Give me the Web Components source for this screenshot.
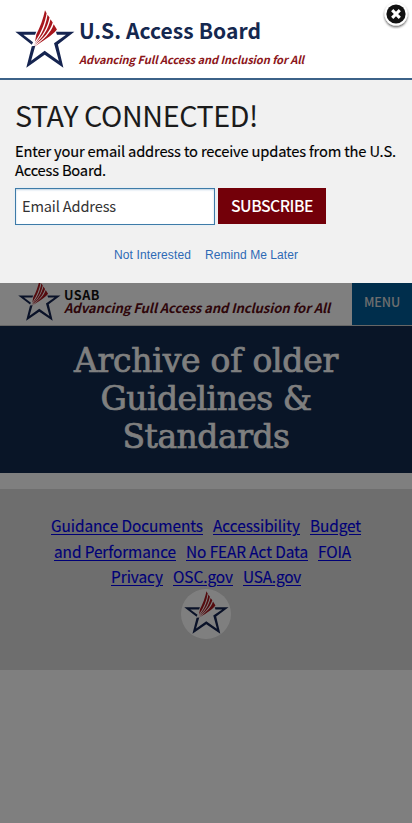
<!DOCTYPE html>
<html lang="en"><head><meta charset="utf-8"><title>U.S. Access Board</title>
<style>
html,body{margin:0;height:100%;overflow:hidden;background:#fff}
body{font-family:"Noto Sans CJK SC","Noto Sans",sans-serif}
</style></head><body>
<access-app></access-app>
<script>
const define=(name,html,extra)=>customElements.define(name,class extends HTMLElement{
  constructor(){super();this.attachShadow({mode:'open'}).innerHTML=html;}
  connectedCallback(){if(extra)extra(this);}
});
// One line of text whose tracking is adjusted to fill the width in the w attribute.
define('fit-text','<style>:host{display:inline-block;white-space:nowrap;text-align:left}span{display:inline-block;text-decoration:inherit}</style><span><slot></slot></span>',el=>{
  const s=el.shadowRoot.querySelector('span'),n=el.textContent.length,w=+el.getAttribute('w');
  s.style.letterSpacing=((w-s.getBoundingClientRect().width)/n)+'px';
  el.style.width=w+'px';
});
define('board-star',`<style>:host{display:block}svg{display:block;width:100%;height:100%}</style>
<svg viewBox="14 12 186 175" preserveAspectRatio="none">
<g fill="#152450"><path d="M15 78H80L76 87H40L70 109L66 117Z"/><path d="M66 121L77 120L64 165L106 135L150 166L135 112L172 87H144L141 78H198L147 116L164 186L106 147L49 186Z"/></g>
<g fill="#a8161d"><path d="M107 13L112 22C107 50 97 78 76 108L80 86C92 64 101 40 107 13Z"/><path d="M115 26L121 35C114 65 102 90 74 114C97 88 109 60 115 26Z"/><path d="M124 40L131 50C122 76 106 97 72 119C101 96 117 70 124 40Z"/><path d="M134 55L144 71C128 91 102 104 69 126C104 100 125 82 134 55Z"/></g></svg>`);
define('brand-bar',`<style>
:host{display:flex;box-sizing:border-box;height:80px;padding:10px 0 0 15px;background:#fff;border-bottom:2px solid #3c6288}
board-star{width:60px;height:58px}
div{display:flex;flex-direction:column;margin-left:4px}
.a{font:bold 21px/30px "Noto Sans CJK SC",sans-serif;color:#15284f;margin-top:5px}
.b{font:italic bold 11px/16px "Noto Sans CJK SC",sans-serif;color:#8c1519;margin-top:6px}
</style><board-star></board-star><div><fit-text class="a" w="182">U.S. Access Board</fit-text><fit-text class="b" w="225">Advancing Full Access and Inclusion for All</fit-text></div>`);
define('subscribe-form',`<style>
:host{display:flex;gap:3px;height:37px}
.in{box-sizing:border-box;width:200px;height:37px;border:1px solid #3e7ba8;background:#fff;padding-left:6px;font-size:14.6px;line-height:34px;color:#333;box-shadow:inset 0 1px 2px #bfd2e2,0 0 3px #dcecf8}
.bt{width:108px;height:36px;background:#730009;color:#fff;font-size:15.8px;line-height:36px;text-align:center;font-weight:500}
</style><div class="in"><fit-text w="94">Email Address</fit-text></div><div class="bt"><fit-text w="82">SUBSCRIBE</fit-text></div>`);
define('stay-connected',`<style>
:host{display:block;position:absolute;left:0;top:0;width:412px;height:283px;background:#f1f1f1}
.c{padding:0 0 0 15px}
.h{font-size:28.7px;line-height:38px;color:#1b1b1b;margin-top:16px;display:block}
.p{font-size:14.7px;line-height:19px;color:#000;display:block;-webkit-text-stroke:.15px #000}
.p1{margin-top:7px}
subscribe-form{margin-top:9px}
.l{display:flex;gap:14px;margin:23px 0 0 99px;font:12px/14px "Liberation Sans",sans-serif;color:#2d69b5}
.x{position:absolute;right:2px;top:1px;width:28px;height:28px}
</style><brand-bar></brand-bar><div class="c">
<fit-text class="h" w="243">STAY CONNECTED!</fit-text>
<fit-text class="p p1" w="381">Enter your email address to receive updates from the U.S.</fit-text>
<fit-text class="p" w="91">Access Board.</fit-text>
<subscribe-form></subscribe-form>
<div class="l"><fit-text w="77">Not Interested</fit-text><fit-text w="93">Remind Me Later</fit-text></div></div>
<svg class="x" viewBox="0 0 28 28"><defs><filter id="f" x="-30%" y="-30%" width="160%" height="160%"><feDropShadow dx="0" dy="1.5" stdDeviation="1.3" flood-opacity=".65"/></filter></defs><circle cx="14" cy="13" r="11.5" fill="#fff" filter="url(#f)"/><circle cx="14" cy="13" r="9.6" fill="#111"/><path d="M10.2 9.2L17.8 16.8M17.8 9.2L10.2 16.8" stroke="#fff" stroke-width="3.1"/></svg>`);
define('site-header',`<style>
:host{display:flex;height:59px;box-sizing:border-box;border-bottom:1px solid #ccc;background:#fff;padding-left:18px}
board-star{width:43px;height:41px;margin-top:13px}
.t{display:flex;flex-direction:column;margin-left:3px;flex:1}
.a{font-size:12.7px;line-height:13px;font-weight:bold;color:#111;margin-top:21px}
.b{font-size:13.1px;line-height:13px;font-weight:bold;font-style:italic;color:#5c0c14}
.m{width:60px;background:#005c99;color:#ddd;text-align:center;font-size:12.6px;line-height:69px;font-weight:500}
</style><board-star></board-star><div class="t"><fit-text class="a" w="36">USAB</fit-text><fit-text class="b" w="266">Advancing Full Access and Inclusion for All</fit-text></div><div class="m"><fit-text w="36">MENU</fit-text></div>`);
define('page-title',`<style>:host{display:flex;flex-direction:column;align-items:center;box-sizing:border-box;height:147px;padding-top:16px;background:#132b4f;color:#fff;font:33px/38px "DejaVu Serif",serif;-webkit-text-stroke:.7px #fff}</style>
<fit-text w="264">Archive of older</fit-text><fit-text w="211">Guidelines &amp;</fit-text><fit-text w="167">Standards</fit-text>`);
define('site-footer',`<style>
:host{display:flex;flex-direction:column;align-items:center;box-sizing:border-box;height:181px;margin-top:16px;padding-top:24px;background:#dcdcdc}
div{display:flex;gap:10px;height:25.5px;font-size:15.4px;line-height:25px}
fit-text{text-decoration:underline;text-underline-offset:1.5px;color:#0000ee;-webkit-text-stroke:.15px #0000ee}
section{width:50px;height:50px;border-radius:50%;background:#fff;display:flex;box-sizing:border-box;padding:2px 2.5px;margin-top:-1px}
board-star{width:45px;height:43px}
</style>
<div><fit-text w="152">Guidance Documents</fit-text><fit-text w="87">Accessibility</fit-text><fit-text w="51">Budget</fit-text></div>
<div style="margin-right:7px"><fit-text w="122">and Performance</fit-text><fit-text w="122">No FEAR Act Data</fit-text><fit-text w="33">FOIA</fit-text></div>
<div><fit-text w="52">Privacy</fit-text><fit-text w="60">OSC.gov</fit-text><fit-text w="58">USA.gov</fit-text></div>
<section><board-star></board-star></section>`);
define('access-app',`<style>
:host{display:block;position:relative;width:412px;height:823px;overflow:hidden}
main{padding-top:267px}
.shade{position:absolute;inset:0;background:rgba(0,0,0,.5)}
</style><main><site-header></site-header><page-title></page-title><site-footer></site-footer></main><div class="shade"></div><stay-connected></stay-connected>`);
</script></body></html>
